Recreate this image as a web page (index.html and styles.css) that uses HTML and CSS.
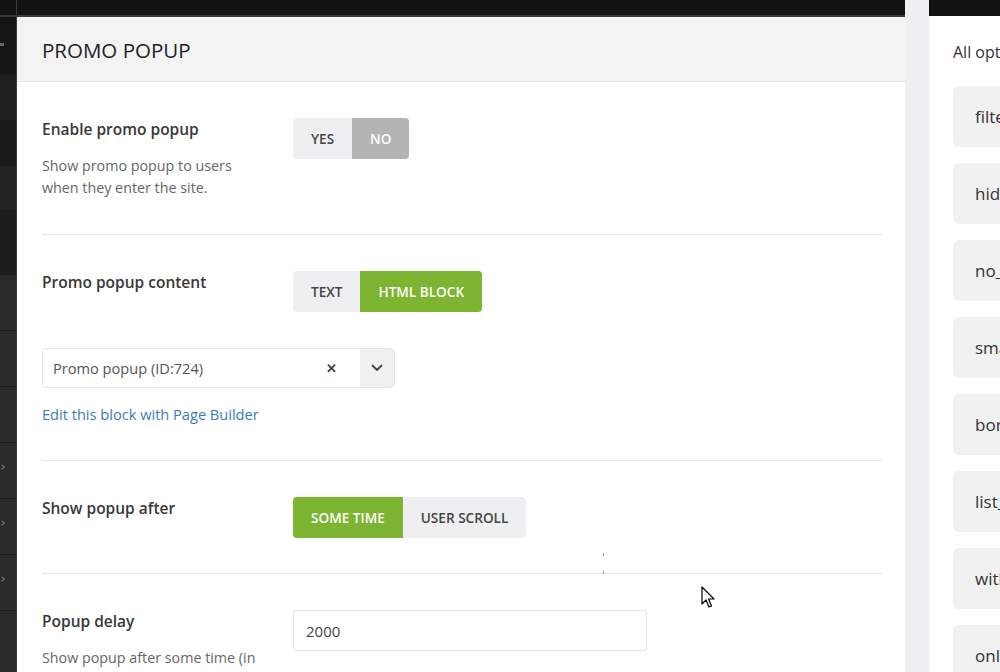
FILE: index.html
```html
<!DOCTYPE html>
<html lang="en">
<head>
<meta charset="utf-8">
<title>Promo popup</title>
<link rel="stylesheet" href="styles.css">
</head>
<body>
<div class="screen">
  <aside class="side-strip">
    <div class="topbar"></div>
    <div class="strip-rows">
      <div class="srow s1"><span class="mark"></span></div>
      <div class="srow s2"></div>
      <div class="srow s3"></div>
      <div class="srow s4"></div>
      <div class="srow s5"></div>
      <div class="srow s6"></div>
      <div class="srow s6"></div>
      <div class="srow s6"></div>
      <div class="srow s6"><span class="chev"></span></div>
      <div class="srow s6"><span class="chev"></span></div>
      <div class="srow s6"><span class="chev"></span></div>
    </div>
  </aside>

  <main class="panel">
    <div class="topbar"></div>
    <header class="panel-head">
      <h1 class="panel-title">PROMO POPUP</h1>
    </header>
    <div class="panel-body">
      <section class="opt">
        <div class="opt-line">
          <div class="opt-label">
            <div class="opt-name">Enable promo popup</div>
            <p class="opt-desc">Show promo popup to users<br>when they enter the site.</p>
          </div>
          <div class="seg">
            <span class="seg-btn">YES</span>
            <span class="seg-btn off">NO</span>
          </div>
        </div>
      </section>

      <section class="opt">
        <div class="opt-line">
          <div class="opt-label">
            <div class="opt-name">Promo popup content</div>
          </div>
          <div class="seg">
            <span class="seg-btn">TEXT</span>
            <span class="seg-btn on">HTML BLOCK</span>
          </div>
        </div>
        <div class="select">
          <span class="select-value">Promo popup (ID:724)</span>
          <span class="select-clear">&#x2715;</span>
          <span class="select-arrow">
            <svg width="12" height="8" viewBox="0 0 12 8"><path d="M1.5 1.5 L6 6 L10.5 1.5" fill="none" stroke="#444" stroke-width="1.8" stroke-linecap="round" stroke-linejoin="round"/></svg>
          </span>
        </div>
        <a class="edit-link" href="#">Edit this block with Page Builder</a>
      </section>

      <section class="opt">
        <div class="opt-line">
          <div class="opt-label">
            <div class="opt-name">Show popup after</div>
          </div>
          <div class="seg">
            <span class="seg-btn on">SOME TIME</span>
            <span class="seg-btn">USER SCROLL</span>
          </div>
        </div>
        <span class="tick t1"></span>
        <span class="tick t2"></span>
      </section>

      <section class="opt last">
        <div class="opt-line">
          <div class="opt-label">
            <div class="opt-name">Popup delay</div>
            <p class="opt-desc">Show popup after some time (in</p>
          </div>
          <div class="text-input">2000</div>
        </div>
      </section>
    </div>
  </main>

  <div class="gap-strip"></div>

  <aside class="options">
    <div class="topbar"></div>
    <div class="options-body">
      <div class="options-title">All options</div>
      <div class="chip">filters_area</div>
      <div class="chip">hide_larger_price</div>
      <div class="chip">no_sidebar</div>
      <div class="chip">small_product</div>
      <div class="chip">border</div>
      <div class="chip">list_view</div>
      <div class="chip">with_sidebar</div>
      <div class="chip">only_products</div>
    </div>
  </aside>

  <svg class="cursor" width="16" height="24" viewBox="0 0 16 24">
    <path d="M1 1 L1 18 L5 14 L8 21 L10.5 20 L7.5 13 L13 13 Z" fill="#fff" stroke="#000" stroke-width="1.2" stroke-linejoin="round"/>
  </svg>
</div>
</body>
</html>
```

FILE: styles.css
```css
* { box-sizing: border-box; }

html, body {
  margin: 0;
  padding: 0;
  width: 1000px;
  height: 672px;
  overflow: hidden;
  background: #121212;
  font-family: "Open Sans", "Noto Sans", "Liberation Sans", sans-serif;
}

.screen {
  position: relative;
  display: flex;
  width: 1000px;
  height: 672px;
  overflow: hidden;
}

.topbar {
  height: 17px;
  background: #121212;
  border-bottom: 2px solid #3a3a3a;
  flex: none;
}

/* left dark strip */
.side-strip {
  width: 17px;
  flex: none;
  display: flex;
  flex-direction: column;
  border-right: 1px solid #3b3b3b;
}
.strip-rows { flex: 1; display: flex; flex-direction: column; background: #2a2a2a; }
.srow { position: relative; flex: none; border-bottom: 1px solid #1a1a1a; }
.s1 { height: 58px; background: #141414; }
.s2 { height: 46px; background: #1f1f1f; }
.s3 { height: 45px; background: #1a1a1a; }
.s4 { height: 45px; background: #222222; }
.s5 { height: 64px; background: #1c1c1c; }
.s6 { height: 56px; background: #2b2b2b; }
.mark {
  position: absolute; left: 0; top: 26px;
  width: 4px; height: 3px; background: #666;
}
.chev {
  position: absolute; left: 0; top: 22px;
  width: 4px; height: 4px;
  border-right: 1px solid #777; border-bottom: 1px solid #777;
  transform: rotate(-45deg);
}

/* main panel */
.panel {
  width: 888px;
  flex: none;
  display: flex;
  flex-direction: column;
  background: #fff;
}
.panel-head {
  flex: none;
  height: 65px;
  background: #f3f3f4;
  border-bottom: 1px solid #e9e9ea;
  display: flex;
  align-items: center;
  padding-left: 25px;
}
.panel-title {
  margin: 0;
  font-size: 20.5px;
  font-weight: 500;
  color: #222;
  line-height: 1;
  padding-top: 2px;
}
.panel-body { flex: none; padding: 0 23px 0 25px; }

.opt {
  position: relative;
  padding: 36px 0 35px;
  border-bottom: 1px solid #e7e7ea;
}
.opt.last { border-bottom: none; }
.opt-line { display: flex; align-items: flex-start; }
.opt-label { width: 251px; flex: none; }
.opt-name {
  font-size: 15.5px;
  font-weight: 600;
  color: #383838;
  line-height: 22px;
}
.opt-desc {
  margin: 15px 0 0;
  font-size: 14.3px;
  line-height: 22px;
  color: #666;
}

.seg {
  display: flex;
  height: 41px;
  border-radius: 4px;
  overflow: hidden;
}
.seg-btn {
  display: flex;
  align-items: center;
  padding: 0 18px;
  background: #efeff1;
  color: #454545;
  font-size: 13.6px;
  font-weight: 600;
}
.seg-btn.off { background: #b4b4b4; color: #fff; }
.seg-btn.on { background: #7db431; color: #fff; }

.tick {
  position: absolute;
  left: 561px;
  width: 1px;
  height: 3px;
  background: #999;
}
.tick.t1 { bottom: 17px; }
.tick.t2 { bottom: -1px; }

.select {
  margin-top: 36px;
  width: 353px;
  height: 40px;
  border: 1px solid #e6e6e8;
  border-radius: 4px;
  display: flex;
  align-items: center;
  overflow: hidden;
}
.select-value {
  flex: 1;
  padding-left: 10px;
  font-size: 14.6px;
  color: #555;
}
.select-clear {
  width: 26px;
  font-size: 13px;
  font-weight: 700;
  color: #444;
  margin-right: 8px;
}
.select-arrow {
  width: 34px;
  height: 100%;
  background: #f1f1f2;
  display: flex;
  align-items: center;
  justify-content: center;
}
.edit-link {
  display: block;
  margin-top: 15px;
  font-size: 14.6px;
  line-height: 22px;
  color: #3a7cbd;
  text-decoration: none;
}

.text-input {
  width: 354px;
  height: 41px;
  border: 1px solid #e5e5e8;
  border-radius: 3px;
  display: flex;
  align-items: center;
  padding-left: 12px;
  font-size: 15px;
  color: #444;
}

/* grey separator strip */
.gap-strip {
  width: 24px;
  flex: none;
  background: #efeff1;
}

/* right options column */
.options {
  flex: 1;
  display: flex;
  flex-direction: column;
  background: #fff;
  overflow: hidden;
}
.options .topbar { border-bottom: none; height: 16px; }
.options-body { flex: none; padding: 24px 0 0 24px; }
.options-title {
  font-size: 16px;
  color: #333;
  line-height: 24px;
  white-space: nowrap;
  margin-bottom: 22px;
}
.chip {
  height: 61px;
  margin-bottom: 16px;
  width: 200px;
  border-radius: 6px;
  background: #f1f1f2;
  display: flex;
  align-items: center;
  padding-left: 22px;
  font-size: 17px;
  font-weight: 500;
  color: #333;
  white-space: nowrap;
}

.cursor {
  position: absolute;
  left: 701px;
  top: 586px;
}
```
